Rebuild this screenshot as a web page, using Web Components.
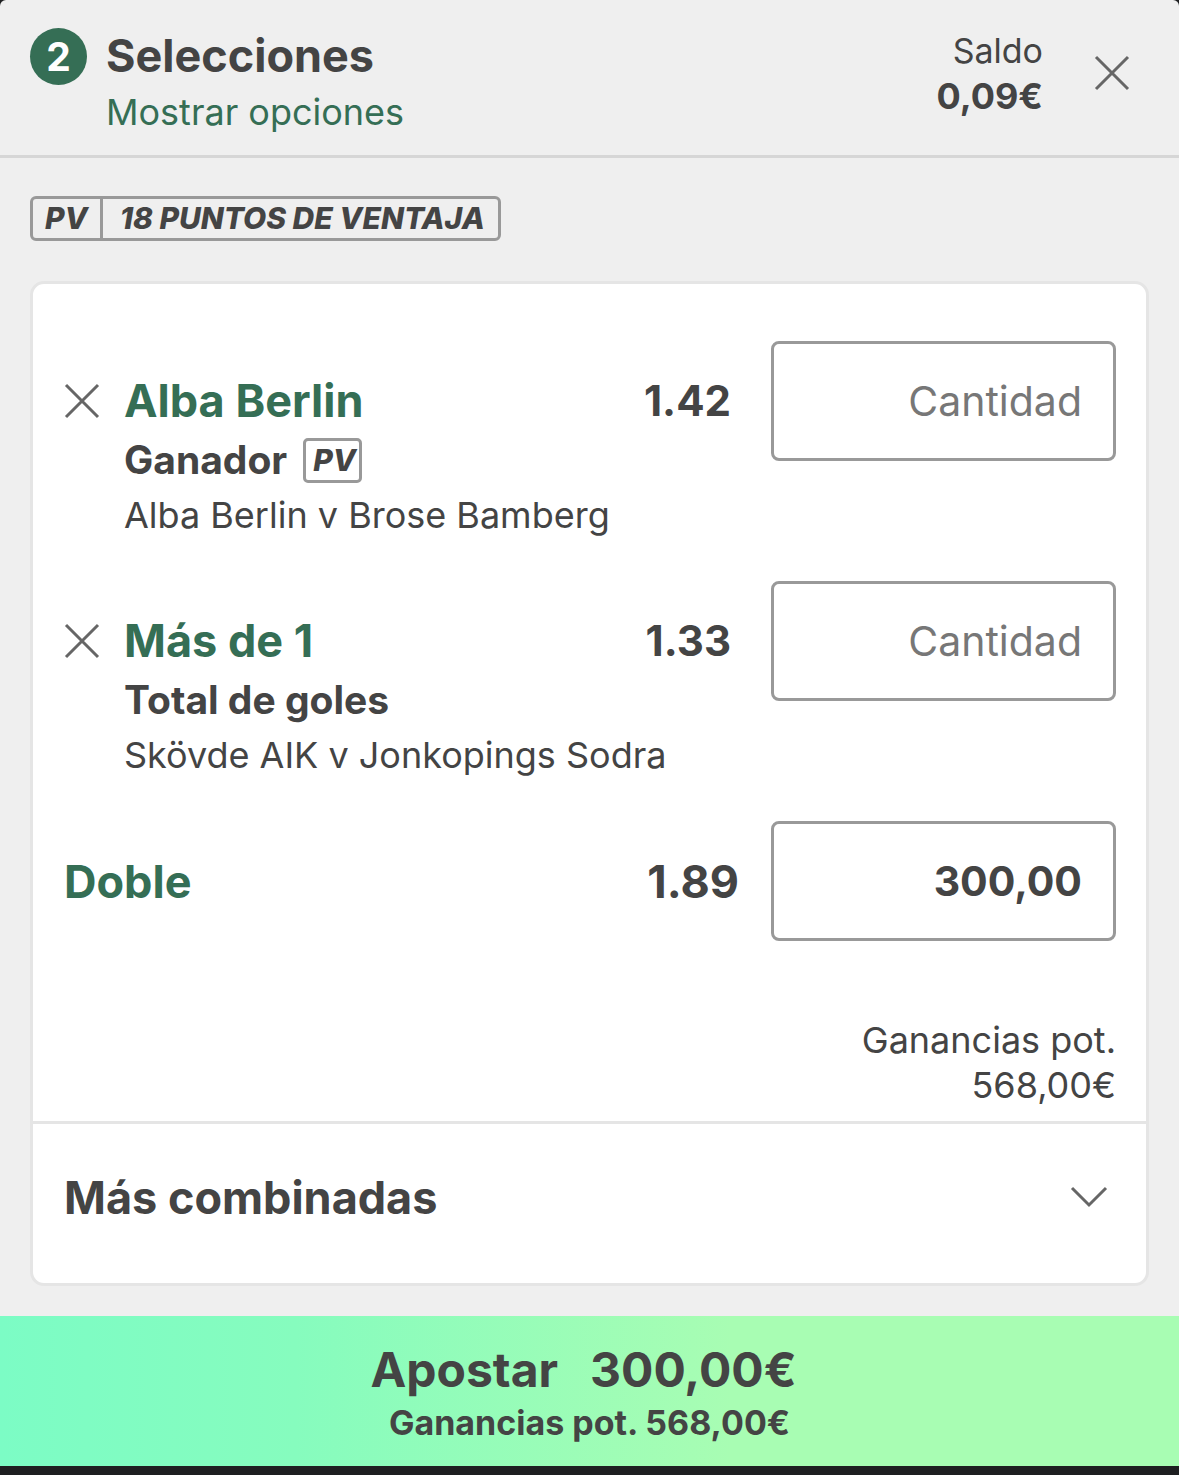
<!DOCTYPE html>
<html lang="es">
<head>
<meta charset="utf-8">
<meta name="viewport" content="width=device-width,initial-scale=1">
<title>Selecciones</title>
<style>
:root{
  --page:#efefef;--card:#fff;--text:#444;--green:#356e55;--line:#999;--soft:#e5e5e5;--icon:#666;
}
body{margin:0;min-height:100vh;background:#1e1f21;color:var(--text);font-family:Inter,"Liberation Sans",sans-serif}
</style>
</head>
<body>
<bet-slip>
  <slip-header slot="header" count="2" balance="0,09€">Selecciones</slip-header>
  <points-banner points="18"></points-banner>
  <slip-card>
    <bet-row odds="1.42" match="Alba Berlin v Brose Bamberg">Alba Berlin<span slot="market">Ganador</span><pv-tag slot="market"></pv-tag></bet-row>
    <bet-row odds="1.33" match="Skövde AIK v Jonkopings Sodra">Más de 1<span slot="market">Total de goles</span></bet-row>
    <multi-row odds="1.89" stake="300,00" returns="568,00€">Doble</multi-row>
    <more-toggle slot="footer">Más combinadas</more-toggle>
  </slip-card>
  <place-bet slot="footer" stake="300,00€" returns="568,00€">Apostar</place-bet>
</bet-slip>
<script>
const cross='<svg width="36" height="36" viewBox="0 0 36 36" aria-hidden="true"><path d="M2 2 34 34M34 2 2 34" fill="none" stroke="currentColor" stroke-width="3"/></svg>';
const reset=`*{box-sizing:border-box}
button{margin:0;padding:0;border:0;background:none;color:inherit;font:inherit;cursor:pointer}
svg{display:block}`;

class SlipElement extends HTMLElement{
constructor(){
  super();
  this.attachShadow({mode:'open'});
}
connectedCallback(){
  this.shadowRoot.innerHTML=`<style>${reset}</style>${this.render()}`;
}
attr(name){
  return this.getAttribute(name)||'';
}
}

class BetSlip extends SlipElement{
render(){
  return `<style>
:host{display:block;background:var(--page);border-radius:6px 6px 0 0}
main{display:flex;flex-direction:column;align-items:stretch;gap:40px;padding:38px 30px 30px}
</style><slot name="header"></slot><main><slot></slot></main><slot name="footer"></slot>`;
}
}

class SlipHeader extends SlipElement{
render(){
  return `<style>
:host{display:block;border-bottom:3px solid #d6d6d6}
header{display:flex;align-items:flex-start;gap:19px;padding:28px 49px 14px 30px}
.count{flex:none;width:57px;height:57px;border-radius:50%;background:var(--green);color:#fff;font-size:39px;font-weight:700;line-height:57px;text-align:center}
.title{flex:1}
h1{margin:0;font-size:45px;font-weight:700;line-height:56px}
a{display:block;font-size:36px;line-height:57px;color:var(--green);text-decoration:none}
.balance{font-size:34px;line-height:45px;text-align:right}
.balance b{display:block;font-size:36px;line-height:47px}
button{display:flex;align-items:center;height:90px;margin-left:32px;color:var(--icon)}
</style><header><div class="count">${this.attr('count')}</div>
<div class="title"><h1><slot></slot></h1><a href="#opciones">Mostrar opciones</a></div>
<div class="balance">Saldo<b>${this.attr('balance')}</b></div>
<button type="button" aria-label="Cerrar">${cross}</button></header>`;
}
}

class PointsBanner extends SlipElement{
render(){
  return `<style>
:host{display:flex}
div{display:flex;border:3px solid var(--line);border-radius:6px;font:italic 800 30px/39px Inter,sans-serif}
span{padding:0 12px}
span+span{padding:0 13px 0 17px;border-left:3px solid var(--line)}
</style><div><span>PV</span><span>${this.attr('points')} PUNTOS DE VENTAJA</span></div>`;
}
}

class PvTag extends SlipElement{
render(){
  return `<style>
:host{display:block;border:3px solid var(--line);border-radius:5px;padding:0 3px 0 7px;font:italic 800 30px/39px Inter,sans-serif}
</style>PV`;
}
}

class SlipCard extends SlipElement{
render(){
  return `<style>
:host{display:block;background:var(--card);border:3px solid var(--soft);border-radius:14px}
.bets{padding:57px 30px 13px 31px}
.more{border-top:3px solid var(--soft);padding:0 30px 13px 31px}
</style><div class="bets"><slot></slot></div><div class="more"><slot name="footer"></slot></div>`;
}
}

// stake box shared by the single and the multiple rows
const stakeStyle=`input{flex:none;width:345px;height:120px;padding:0 31px;border:3px solid var(--line);border-radius:8px;background:var(--card);color:inherit;font:700 41px Inter,sans-serif;text-align:right}
input::placeholder{color:#777;font-weight:400;opacity:1}`;

class BetRow extends SlipElement{
render(){
  return `<style>${stakeStyle}
:host{display:flex;align-items:flex-start;height:240px}
button{display:flex;align-items:center;height:120px;width:60px;flex:none;color:var(--icon)}
.info{flex:1;min-width:0;padding-top:31px;white-space:nowrap}
label{display:block;font-size:45px;font-weight:700;line-height:58px;color:var(--green)}
.market{display:flex;align-items:center;gap:16px;font-size:39px;font-weight:700;line-height:60px}
.match{font-size:36px;line-height:50px}
.odds{padding-right:40px;font-size:42px;font-weight:700;line-height:120px}
</style><button type="button" aria-label="Eliminar">${cross}</button>
<div class="info"><label for="stake"><slot></slot></label><div class="market"><slot name="market"></slot></div><div class="match">${this.attr('match')}</div></div>
<div class="odds">${this.attr('odds')}</div>
<input id="stake" inputmode="decimal" placeholder="Cantidad">`;
}
}

class MultiRow extends SlipElement{
render(){
  return `<style>${stakeStyle}
:host{display:block}
.row{display:flex;align-items:center}
label{flex:1;font-size:45px;font-weight:700;color:var(--green)}
.odds{padding-right:32px;font-size:45px;font-weight:700}
.returns{padding-top:77px;font-size:36px;line-height:45px;text-align:right}
</style><div class="row"><label for="stake"><slot></slot></label><div class="odds">${this.attr('odds')}</div>
<input id="stake" inputmode="decimal" value="${this.attr('stake')}"></div>
<div class="returns">Ganancias pot.<br>${this.attr('returns')}</div>`;
}
}

class MoreToggle extends SlipElement{
render(){
  return `<style>
:host{display:block}
button{display:flex;align-items:center;justify-content:space-between;width:100%;height:146px;padding-right:8px;font-size:45px;font-weight:700}
svg{color:var(--icon)}
</style><button type="button" aria-expanded="false"><span><slot></slot></span>
<svg width="38" height="22" viewBox="0 0 38 22" aria-hidden="true"><path d="M2 2 19 19 36 2" fill="none" stroke="currentColor" stroke-width="3"/></svg></button>`;
}
}

class PlaceBet extends SlipElement{
render(){
  return `<style>
:host{display:block}
button{display:block;width:100%;padding:24px 30px 20px;background:linear-gradient(90deg,#7cfcc5,#86fcbe 25%,#a8fdb3 62%);text-align:center;font-weight:700}
.main{display:flex;justify-content:center;gap:32px;padding-right:12px;font-size:48px;line-height:60px}
.sub{display:block;font-size:34px;line-height:46px}
</style><button type="button"><span class="main"><span><slot></slot></span><span>${this.attr('stake')}</span></span>
<span class="sub">Ganancias pot. ${this.attr('returns')}</span></button>`;
}
}

customElements.define('bet-slip',BetSlip);
customElements.define('slip-header',SlipHeader);
customElements.define('points-banner',PointsBanner);
customElements.define('pv-tag',PvTag);
customElements.define('slip-card',SlipCard);
customElements.define('bet-row',BetRow);
customElements.define('multi-row',MultiRow);
customElements.define('more-toggle',MoreToggle);
customElements.define('place-bet',PlaceBet);
</script>
</body>
</html>
